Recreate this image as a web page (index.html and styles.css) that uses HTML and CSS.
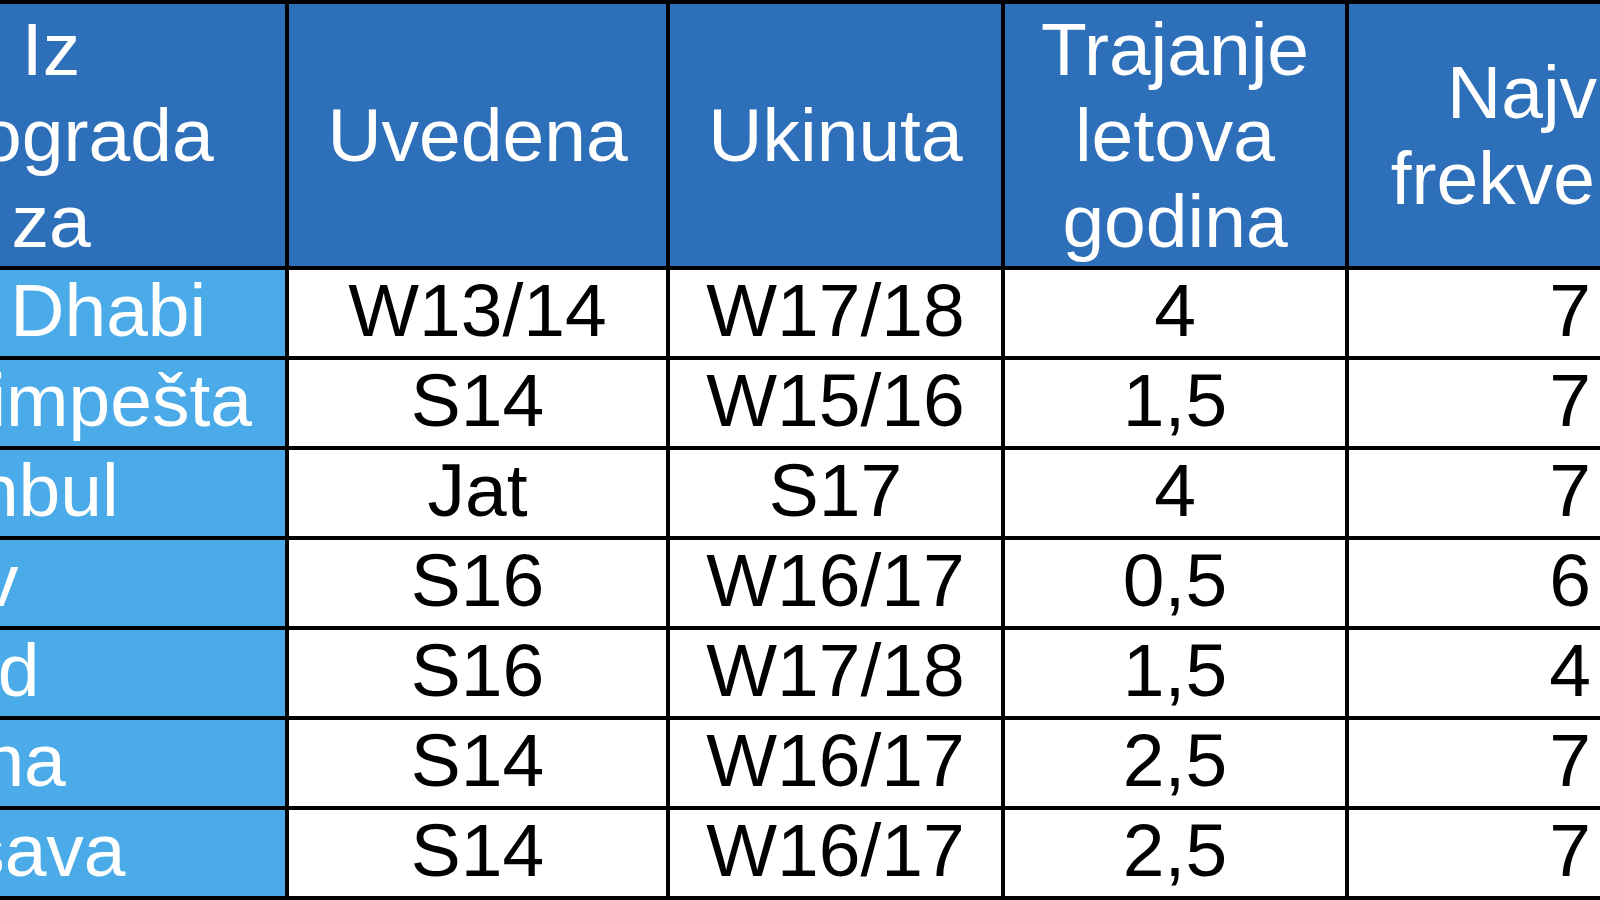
FILE: index.html
```html
<!DOCTYPE html>
<html lang="sr">
<head>
<meta charset="utf-8">
<title>Linije</title>
<link rel="stylesheet" href="styles.css">
</head>
<body>
<div class="routes">
  <div class="cell head">Iz<br>Beograda<br>za</div>
  <div class="cell head">Uvedena</div>
  <div class="cell head">Ukinuta</div>
  <div class="cell head">Trajanje<br>letova<br>godina</div>
  <div class="cell head">Najviša<br>frekvencija</div>

  <div class="cell city">Abu Dhabi</div>
  <div class="cell">W13/14</div>
  <div class="cell">W17/18</div>
  <div class="cell">4</div>
  <div class="cell">7</div>

  <div class="cell city">Budimpešta</div>
  <div class="cell">S14</div>
  <div class="cell">W15/16</div>
  <div class="cell">1,5</div>
  <div class="cell">7</div>

  <div class="cell city">Istanbul</div>
  <div class="cell">Jat</div>
  <div class="cell">S17</div>
  <div class="cell">4</div>
  <div class="cell">7</div>

  <div class="cell city">Kijev</div>
  <div class="cell">S16</div>
  <div class="cell">W16/17</div>
  <div class="cell">0,5</div>
  <div class="cell">6</div>

  <div class="cell city">Ohrid</div>
  <div class="cell">S16</div>
  <div class="cell">W17/18</div>
  <div class="cell">1,5</div>
  <div class="cell">4</div>

  <div class="cell city">Tirana</div>
  <div class="cell">S14</div>
  <div class="cell">W16/17</div>
  <div class="cell">2,5</div>
  <div class="cell">7</div>

  <div class="cell city">Varšava</div>
  <div class="cell">S14</div>
  <div class="cell">W16/17</div>
  <div class="cell">2,5</div>
  <div class="cell">7</div>
</div>
</body>
</html>
```
FILE: styles.css
```css
html, body {
  margin: 0;
  padding: 0;
  width: 1600px;
  height: 900px;
  overflow: hidden;
  background: #000;
}

.routes {
  display: grid;
  width: max-content;
  grid-template-columns: 468px 377px 331px 340px 442px;
  grid-template-rows: 262px repeat(7, 86px);
  gap: 4px;
  padding: 4px;
  margin-left: -187px;
  background: #000;
  font-family: "Liberation Sans", Arial, sans-serif;
  font-size: 75px;
  color: #000;
}

.cell {
  display: flex;
  align-items: center;
  justify-content: center;
  text-align: center;
  background: #fff;
  white-space: nowrap;
  padding-bottom: 7px;
  box-sizing: border-box;
}

.head {
  background: #2e6fba;
  color: #fff;
  padding-bottom: 0;
  line-height: 86px;
}

.city {
  background: #4aabe8;
  color: #fff;
  justify-content: flex-start;
  padding-left: 39px;
}
```
